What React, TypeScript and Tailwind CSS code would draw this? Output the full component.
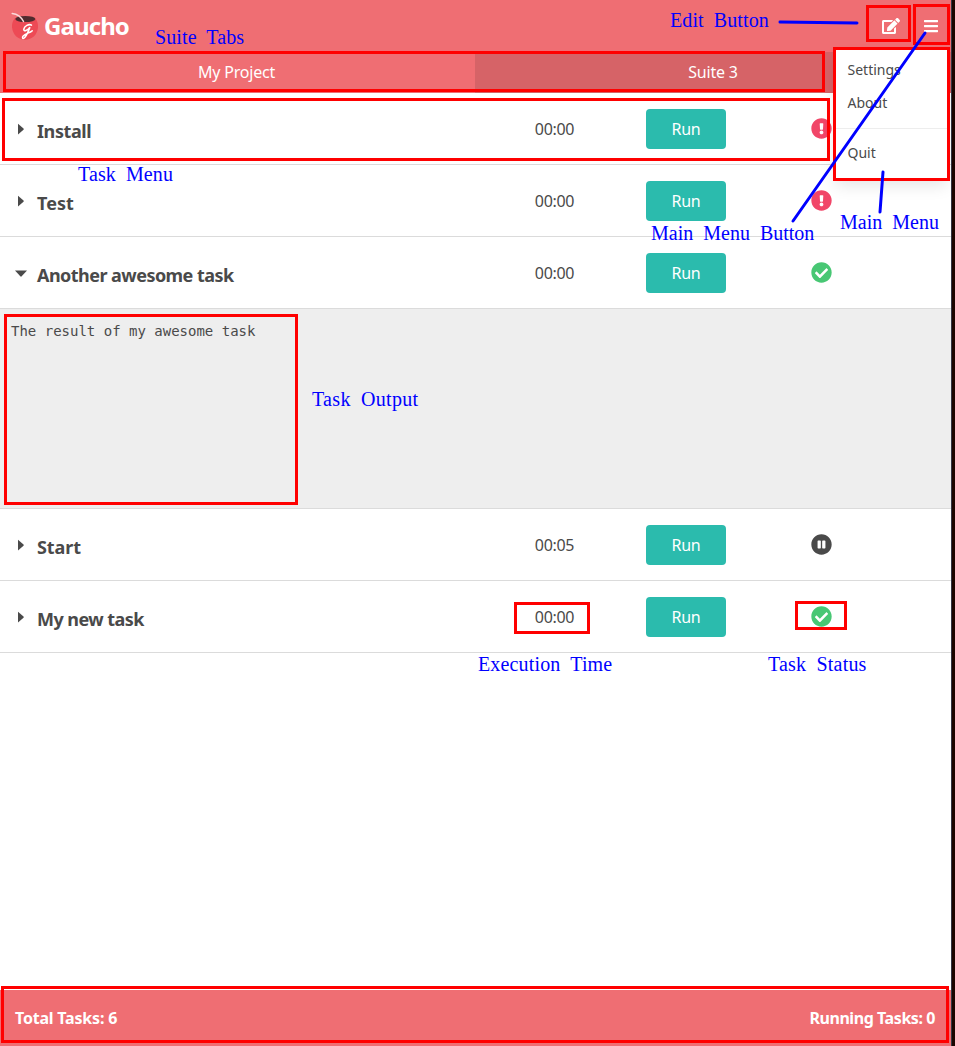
import React from "react";
import {
  FaBars,
  FaCheckCircle,
  FaExclamationCircle,
  FaPauseCircle,
} from "react-icons/fa";

type Status = "error" | "ok" | "paused";

interface Task {
  name: string;
  time: string;
  status: Status;
  tracking: string;
  output?: string;
}

const tasks: Task[] = [
  { name: "Install", time: "00:00", status: "error", tracking: "tracking-[-0.4px]" },
  { name: "Test", time: "00:00", status: "error", tracking: "tracking-[0.05px]" },
  {
    name: "Another awesome task",
    time: "00:00",
    status: "ok",
    tracking: "tracking-[-0.54px]",
    output: "The result of my awesome task",
  },
  { name: "Start", time: "00:05", status: "paused", tracking: "tracking-[-0.1px]" },
  { name: "My new task", time: "00:00", status: "ok", tracking: "tracking-[-0.56px]" },
];

function Logo() {
  return (
    <svg className="h-[28px] w-[28px] shrink-0" viewBox="0 0 28 28" fill="none">
      <path d="M4 6C1.500 9 .8 12 1 15.500 2 23 7 27.700 14 27.700S26.200 23 27 15.500C27.200 12 26.500 9 24 6z" fill="#ed4a55" />
      <ellipse cx="14.300" cy="7" rx="10" ry="3.100" fill="#4f2b2e" />
      <path d="M1.200 1.500C6 2 9.500 3.500 12.500 9.500" stroke="#fbd9da" strokeWidth="1.500" strokeLinecap="round" />
      <path
        d="M20.500 13.200c-2.500-1.700-7.300 1-7.700 4-.2 2.800 3.700 1.300 6.200-2-2 4.500-3.500 9.300-6 11-1.600.9-2-1-.8-2.200 2.200-2.200 6-3 9-5.200"
        stroke="#fff"
        strokeWidth="1.500"
        strokeLinecap="round"
      />
    </svg>
  );
}

function EditIcon() {
  return (
    <svg className="ml-auto h-[16px] w-[18px]" viewBox="0 0 576 512" fill="currentColor">
      <path d="M402.6 83.2l90.2 90.2c3.8 3.8 3.8 10 0 13.8L274.4 405.6l-92.8 10.3c-12.4 1.4-22.9-9.1-21.5-21.5l10.3-92.8L388.8 83.2c3.8-3.8 10-3.8 13.8 0zm162-22.9l-48.8-48.8c-15.2-15.2-39.9-15.2-55.2 0l-35.4 35.4c-3.8 3.8-3.8 10 0 13.8l90.2 90.2c3.8 3.8 10 3.8 13.8 0l35.4-35.4c15.2-15.3 15.2-40 0-55.2zM384 346.2V448H64V128h229.8c3.2 0 6.2-1.3 8.5-3.5l40-40c7.6-7.6 2.2-20.5-8.5-20.5H48C21.5 64 0 85.5 0 112v352c0 26.5 21.5 48 48 48h352c26.5 0 48-21.5 48-48V306.2c0-10.7-12.9-16-20.5-8.5l-40 40c-2.2 2.3-3.5 5.3-3.5 8.5z" />
    </svg>
  );
}

function Caret({ open }: { open: boolean }) {
  return (
    <svg className="h-[14px] w-[14px]" viewBox="0 0 14 14" fill="#4a4a4a">
      {open ? <path d="M1 4.500h12L7.700 10.300q-.7.700-1.400 0z" /> : <path d="M4 1.700v10.800l5.500-4.700q.6-.6 0-1.200z" />}
    </svg>
  );
}

function StatusIcon({ status }: { status: Status }) {
  if (status === "error") return <FaExclamationCircle size={21} color="#f14668" />;
  if (status === "ok") return <FaCheckCircle size={21} color="#48c774" />;
  return <FaPauseCircle size={21} color="#4a4a4a" />;
}

function TaskRow({ task }: { task: Task }) {
  return (
    <>
      <div className="flex h-[72px] shrink-0 items-center border-b border-[#dbdbdb]">
        <div className="flex w-[475px] items-center pl-[14px]">
          <Caret open={!!task.output} />
          <span className={`ml-[9px] mt-[4px] text-[18px] leading-6 font-bold whitespace-nowrap ${task.tracking}`}>
            {task.name}
          </span>
        </div>
        <div className="w-[159px] text-center text-[16px] leading-6 tracking-[-0.3px]">{task.time}</div>
        <div className="w-[158px] pl-[12px]">
          <button className="flex h-[40px] w-[80px] items-center justify-center rounded-[4px] bg-[#2bbbad] text-[16px] tracking-[-0.2px] text-white">
            Run
          </button>
        </div>
        <div className="pl-[19px]">
          <StatusIcon status={task.status} />
        </div>
      </div>
      {task.output && (
        <pre className="h-[200px] shrink-0 border-b border-[#dbdbdb] bg-[#eeeeee] px-[11px] py-[12px] font-['DejaVu_Sans_Mono',monospace] text-[14px] leading-[21px]">
          {task.output}
        </pre>
      )}
    </>
  );
}

function Box({ className }: { className: string }) {
  return <div className={`absolute border-[3px] border-[#ff0000] ${className}`} />;
}

function Label({ className, children }: { className: string; children: string }) {
  return (
    <span
      className={`absolute text-[20px] leading-6 whitespace-nowrap text-[#0000ff] [word-spacing:5px] font-['Liberation_Serif',serif] ${className}`}
    >
      {children}
    </span>
  );
}

function Annotations() {
  return (
    <div className="pointer-events-none absolute inset-0">
      <Box className="left-[3px] top-[51px] h-[41px] w-[822px]" />
      <Box className="left-[2px] top-[98px] h-[63px] w-[828px]" />
      <Box className="left-[866px] top-[5px] h-[37px] w-[45px]" />
      <Box className="left-[913px] top-[4px] h-[41px] w-[37px]" />
      <Box className="left-[833px] top-[47px] h-[134px] w-[117px]" />
      <Box className="left-[4px] top-[314px] h-[191px] w-[294px]" />
      <Box className="left-[514px] top-[602px] h-[32px] w-[76px]" />
      <Box className="left-[795px] top-[601px] h-[29px] w-[52px]" />
      <Box className="left-[1px] top-[986px] h-[57px] w-[948px]" />
      <svg className="absolute inset-0 h-full w-full" viewBox="0 0 955 1046" stroke="#0000ff" strokeWidth="3" strokeLinecap="round">
        <path d="M780 22L857 23M925 33L793 221M883 172L880 212" />
      </svg>
      <Label className="left-[155px] top-[25px] tracking-[0.1px]">Suite Tabs</Label>
      <Label className="left-[670px] top-[8px] tracking-[0.1px]">Edit Button</Label>
      <Label className="left-[78px] top-[162px] tracking-[0.1px]">Task Menu</Label>
      <Label className="left-[651px] top-[221px]">Main Menu Button</Label>
      <Label className="left-[840px] top-[210px]">Main Menu</Label>
      <Label className="left-[312px] top-[387px] tracking-[0.3px]">Task Output</Label>
      <Label className="left-[478px] top-[652px] tracking-[0.15px]">Execution Time</Label>
      <Label className="left-[768px] top-[652px] tracking-[0.2px]">Task Status</Label>
    </div>
  );
}

export default function App() {
  return (
    <div className="relative flex h-[1046px] w-[955px] overflow-hidden bg-[#1b0500] font-['Noto_Sans',sans-serif] text-[#4a4a4a]">
      <div className="flex w-[951px] flex-col bg-white">
        <header className="flex h-[52px] shrink-0 items-center bg-[#ef6e73] pl-[11px] text-white">
          <Logo />
          <h1 className="ml-[5px] text-[24px] font-bold tracking-[-0.9px]">Gaucho</h1>
          <EditIcon />
          <FaBars className="mr-[13px] ml-[24px] h-[16px] w-[14px]" />
        </header>
        <nav className="flex h-[41px] shrink-0 bg-[#ef6e73] pb-0 text-[16px] text-white">
          <div className="flex w-[475px] items-center justify-center pr-[2px] pb-[2px] tracking-[-0.2px]">My Project</div>
          <div className="flex flex-1 items-center justify-center bg-[#d66367] pb-[2px] tracking-[-0.2px]">Suite 3</div>
        </nav>
        <main className="flex flex-1 flex-col">
          {tasks.map((task) => (
            <TaskRow key={task.name} task={task} />
          ))}
        </main>
        <footer className="flex h-[56px] shrink-0 items-center justify-between bg-[#ef6e73] pr-[16px] pl-[15px] text-[16px] font-bold text-white">
          <span className="tracking-[-0.2px]">Total Tasks: 6</span>
          <span className="tracking-[-0.43px]">Running Tasks: 0</span>
        </footer>
      </div>
      <div className="w-[1px] bg-[#343644]" />
      <div className="absolute left-[833px] top-[48px] flex h-[132px] w-[116px] flex-col rounded-[4px] bg-white pt-[6px] text-[14px] leading-[21px] shadow-[0_8px_16px_-2px_rgba(10,10,10,0.1)]">
        <div className="h-[33px] px-[14.5px] py-[5px]">Settings</div>
        <div className="h-[33px] px-[14.5px] py-[5px]">About</div>
        <div className="my-[8px] h-px shrink-0 bg-[#ededed]" />
        <div className="h-[33px] px-[14.5px] py-[5px]">Quit</div>
      </div>
      <Annotations />
    </div>
  );
}
